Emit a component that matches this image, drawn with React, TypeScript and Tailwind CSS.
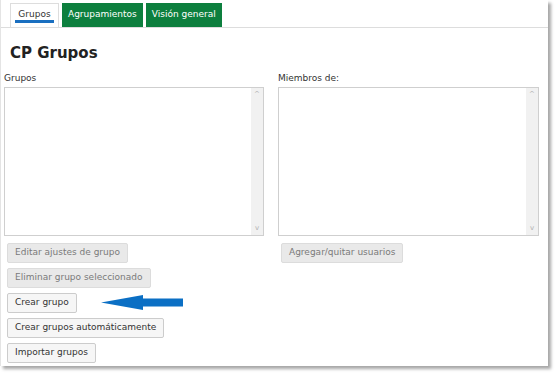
import React from 'react';

const font = { fontFamily: '"DejaVu Sans", Verdana, sans-serif' };

function ListBox() {
  return (
    <div className="flex h-[149px] border border-[#cfcfcf] bg-white">
      <div className="flex-1" />
      <div className="flex w-[12px] flex-col items-center justify-between bg-[#f1f1f1] py-[3px] text-[7px] leading-none text-[#b0b0b0]">
        <span>^</span>
        <span>v</span>
      </div>
    </div>
  );
}

function Btn({ label, disabled }: { label: string; disabled?: boolean }) {
  return (
    <button
      className={
        disabled
          ? 'h-[20px] rounded-[2px] border border-[#dcdcdc] bg-[#e9e9e9] px-[7px] text-[9px] text-[#7a7a7a]'
          : 'h-[20px] rounded-[2px] border border-[#cccccc] bg-[#f6f6f6] px-[7px] text-[9px] text-[#333333]'
      }
    >
      {label}
    </button>
  );
}

export default function App() {
  return (
    <div className="h-[374px] w-[557px] bg-white" style={font}>
      <div className="relative flex h-[366px] w-[548px] flex-col border-l border-[#e4e4e4] bg-white shadow-[3px_3px_3px_rgba(0,0,0,0.35)]">
        <div className="flex h-[28px] items-end gap-[3px] border-b border-[#dddddd] pl-[9px]">
          <div className="flex h-[24px] w-[49px] flex-col items-center justify-center border border-b-0 border-[#dddddd] bg-white text-[9px] text-[#333]">
            <span className="border-b-[3px] border-[#1a6fc0] px-[3px] leading-[12px]">Grupos</span>
          </div>
          <div className="flex h-[24px] items-center bg-[#0d7f3e] px-[6px] text-[9px] text-white">Agrupamientos</div>
          <div className="flex h-[24px] items-center bg-[#0d7f3e] px-[6px] text-[9px] text-white">Visión general</div>
        </div>
        <h1 className="mt-[14px] pl-[9px] text-[15px] font-bold leading-[22px] text-[#222]">CP Grupos</h1>
        <div className="mt-[8px] flex gap-[14px] pl-[3px]">
          <div className="flex w-[260px] flex-col">
            <div className="mb-[3px] text-[9px] leading-[12px] text-[#333]">Grupos</div>
            <ListBox />
            <div className="mt-[7px] flex flex-col items-start gap-[5px] pl-[3px]">
              <Btn label="Editar ajustes de grupo" disabled />
              <Btn label="Eliminar grupo seleccionado" disabled />
              <Btn label="Crear grupo" />
              <Btn label="Crear grupos automáticamente" />
              <Btn label="Importar grupos" />
            </div>
          </div>
          <div className="flex w-[261px] flex-col">
            <div className="mb-[3px] text-[9px] leading-[12px] text-[#333]">Miembros de:</div>
            <ListBox />
            <div className="mt-[7px] flex pl-[3px]">
              <Btn label="Agregar/quitar usuarios" disabled />
            </div>
          </div>
        </div>
        <svg className="absolute left-[99px] top-[294px]" width="84" height="17" viewBox="0 0 84 17">
          <path d="M1 8.5 L43 1 L43 4.5 L83 4.5 L83 12.5 L43 12.5 L43 16 Z" fill="#0b6fc4" />
        </svg>
      </div>
    </div>
  );
}
